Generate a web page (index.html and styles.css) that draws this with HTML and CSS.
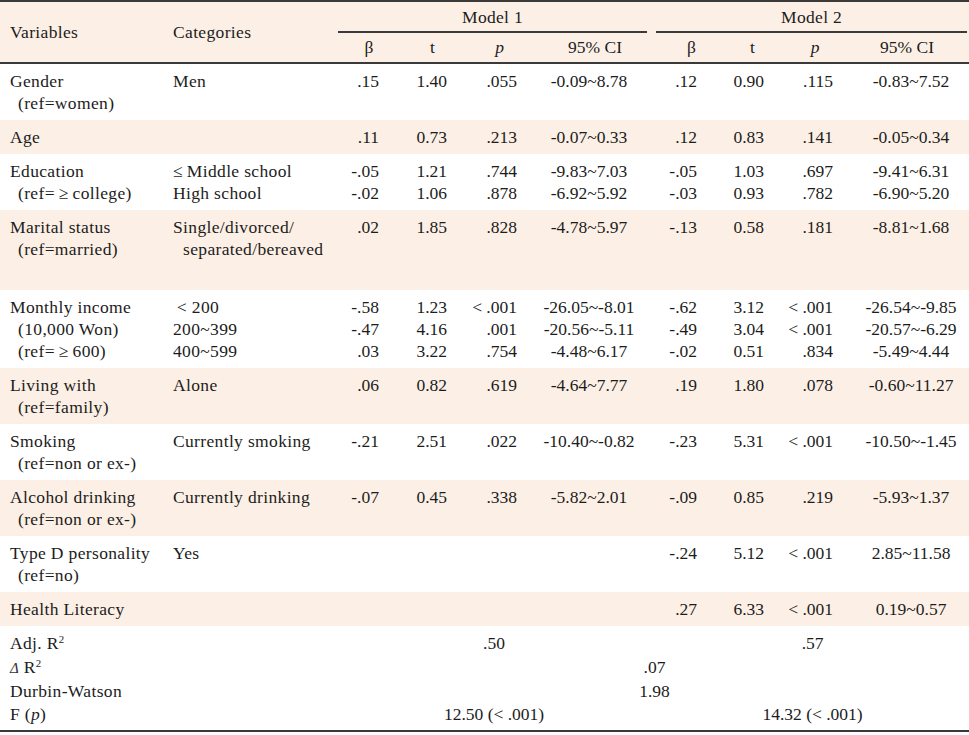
FILE: index.html
```html
<!DOCTYPE html>
<html lang="en">
<head>
<meta charset="utf-8">
<title>Regression table</title>
<link rel="stylesheet" href="styles.css">
</head>
<body>
<table class="reg">
  <colgroup>
    <col class="c-var"><col class="c-cat">
    <col class="c-b1"><col class="c-t1"><col class="c-p1"><col class="c-ci1">
    <col class="c-b2"><col class="c-t2"><col class="c-p2"><col class="c-ci2">
  </colgroup>
  <thead>
    <tr class="h1">
      <th rowspan="2" class="lbl">Variables</th>
      <th rowspan="2" class="lbl">Categories</th>
      <th colspan="4" class="model"><div class="m1">Model 1</div></th>
      <th colspan="4" class="model"><div class="m2">Model 2</div></th>
    </tr>
    <tr class="h2">
      <th class="b1">β</th><th class="t1">t</th><th class="p1"><i>p</i></th><th class="ci1">95% CI</th>
      <th class="b2">β</th><th class="t2">t</th><th class="p2"><i>p</i></th><th class="ci2">95% CI</th>
    </tr>
  </thead>
  <tbody>
    <tr>
      <td class="var">Gender<span class="sub">(ref=women)</span></td>
      <td class="cat">Men</td>
      <td class="b1">.15</td><td class="t1">1.40</td><td class="p1">.055</td><td class="ci1">-0.09~8.78</td>
      <td class="b2">.12</td><td class="t2">0.90</td><td class="p2">.115</td><td class="ci2">-0.83~7.52</td>
    </tr>
    <tr class="alt">
      <td class="var">Age</td>
      <td class="cat"></td>
      <td class="b1">.11</td><td class="t1">0.73</td><td class="p1">.213</td><td class="ci1">-0.07~0.33</td>
      <td class="b2">.12</td><td class="t2">0.83</td><td class="p2">.141</td><td class="ci2">-0.05~0.34</td>
    </tr>
    <tr>
      <td class="var">Education<span class="sub">(ref=&thinsp;≥&thinsp;college)</span></td>
      <td class="cat">≤&thinsp;Middle school<br>High school</td>
      <td class="b1">-.05<br>-.02</td><td class="t1">1.21<br>1.06</td><td class="p1">.744<br>.878</td><td class="ci1">-9.83~7.03<br>-6.92~5.92</td>
      <td class="b2">-.05<br>-.03</td><td class="t2">1.03<br>0.93</td><td class="p2">.697<br>.782</td><td class="ci2">-9.41~6.31<br>-6.90~5.20</td>
    </tr>
    <tr class="alt tall">
      <td class="var">Marital status<span class="sub">(ref=married)</span></td>
      <td class="cat">Single/divorced/<span class="sub2">separated/bereaved</span><span class="sub2">&nbsp;</span></td>
      <td class="b1">.02</td><td class="t1">1.85</td><td class="p1">.828</td><td class="ci1">-4.78~5.97</td>
      <td class="b2">-.13</td><td class="t2">0.58</td><td class="p2">.181</td><td class="ci2">-8.81~1.68</td>
    </tr>
    <tr>
      <td class="var">Monthly income<span class="sub">(10,000 Won)</span><span class="sub">(ref=&thinsp;≥&thinsp;600)</span></td>
      <td class="cat">&thinsp;&lt; 200<br>200~399<br>400~599</td>
      <td class="b1">-.58<br>-.47<br>.03</td><td class="t1">1.23<br>4.16<br>3.22</td><td class="p1">&lt; .001<br>.001<br>.754</td><td class="ci1">-26.05~-8.01<br>-20.56~-5.11<br>-4.48~6.17</td>
      <td class="b2">-.62<br>-.49<br>-.02</td><td class="t2">3.12<br>3.04<br>0.51</td><td class="p2">&lt; .001<br>&lt; .001<br>.834</td><td class="ci2">-26.54~-9.85<br>-20.57~-6.29<br>-5.49~4.44</td>
    </tr>
    <tr class="alt">
      <td class="var">Living with<span class="sub">(ref=family)</span></td>
      <td class="cat">Alone</td>
      <td class="b1">.06</td><td class="t1">0.82</td><td class="p1">.619</td><td class="ci1">-4.64~7.77</td>
      <td class="b2">.19</td><td class="t2">1.80</td><td class="p2">.078</td><td class="ci2">-0.60~11.27</td>
    </tr>
    <tr>
      <td class="var">Smoking<span class="sub">(ref=non or ex-)</span></td>
      <td class="cat">Currently smoking</td>
      <td class="b1">-.21</td><td class="t1">2.51</td><td class="p1">.022</td><td class="ci1">-10.40~-0.82</td>
      <td class="b2">-.23</td><td class="t2">5.31</td><td class="p2">&lt; .001</td><td class="ci2">-10.50~-1.45</td>
    </tr>
    <tr class="alt">
      <td class="var">Alcohol drinking<span class="sub">(ref=non or ex-)</span></td>
      <td class="cat">Currently drinking</td>
      <td class="b1">-.07</td><td class="t1">0.45</td><td class="p1">.338</td><td class="ci1">-5.82~2.01</td>
      <td class="b2">-.09</td><td class="t2">0.85</td><td class="p2">.219</td><td class="ci2">-5.93~1.37</td>
    </tr>
    <tr>
      <td class="var">Type D personality<span class="sub">(ref=no)</span></td>
      <td class="cat">Yes</td>
      <td class="b1"></td><td class="t1"></td><td class="p1"></td><td class="ci1"></td>
      <td class="b2">-.24</td><td class="t2">5.12</td><td class="p2">&lt; .001</td><td class="ci2">2.85~11.58</td>
    </tr>
    <tr class="alt">
      <td class="var">Health Literacy</td>
      <td class="cat"></td>
      <td class="b1"></td><td class="t1"></td><td class="p1"></td><td class="ci1"></td>
      <td class="b2">.27</td><td class="t2">6.33</td><td class="p2">&lt; .001</td><td class="ci2">0.19~0.57</td>
    </tr>
    <tr class="stat s-first">
      <td colspan="2" class="slbl">Adj. R<sup>2</sup></td>
      <td colspan="4" class="sm1">.50</td>
      <td colspan="4" class="sm2">.57</td>
    </tr>
    <tr class="stat s-mid">
      <td colspan="2" class="slbl"><i class="delta">Δ</i> R<sup>2</sup></td>
      <td colspan="8" class="sall">.07</td>
    </tr>
    <tr class="stat s-dw">
      <td colspan="2" class="slbl">Durbin-Watson</td>
      <td colspan="8" class="sall">1.98</td>
    </tr>
    <tr class="stat s-last">
      <td colspan="2" class="slbl">F (<i>p</i>)</td>
      <td colspan="4" class="sm1">12.50 (&lt; .001)</td>
      <td colspan="4" class="sm2">14.32 (&lt; .001)</td>
    </tr>
  </tbody>
</table>
<p class="note">CI=Confidence interval; ref=reference; Adj. R<sup>2</sup>=adjusted R squared.</p>
</body>
</html>
```

FILE: styles.css
```css
html, body {
  margin: 0;
  padding: 0;
  background: #ffffff;
}

body {
  font-family: "Liberation Serif", "Times New Roman", serif;
  font-size: 17.5px;
  line-height: 22px;
  color: #1c1c1c;
}

.reg {
  width: 969px;
  table-layout: fixed;
  border-collapse: separate;
  border-spacing: 0;
  border-top: 2px solid #3a3a3a;
  border-bottom: 2px solid #3a3a3a;
}

.c-var { width: 163px; }
.c-cat { width: 175px; }
.c-b1  { width: 62px; }
.c-t1  { width: 65px; }
.c-p1  { width: 75px; }
.c-ci1 { width: 110px; }
.c-b2  { width: 83px; }
.c-t2  { width: 39px; }
.c-p2  { width: 86px; }
.c-ci2 { width: 111px; }

thead th {
  background: #fcf0e6;
  font-weight: normal;
  white-space: nowrap;
}

th.lbl {
  text-align: left;
  vertical-align: middle;
  padding: 0 0 0 10px;
  letter-spacing: 0.35px;
  border-bottom: 2px solid #3a3a3a;
}

.h1 th.model {
  padding: 4px 0 0 0;
  text-align: center;
  vertical-align: top;
  letter-spacing: 0.3px;
}

.m1, .m2 {
  padding-bottom: 3px;
  border-bottom: 2px solid #3a3a3a;
}

.m1 { margin: 0 3px 0 0; }
.m2 { margin: 0 2px 0 6px; }

.h2 th {
  padding: 3px 0 4px;
  text-align: center;
  border-bottom: 2px solid #3a3a3a;
}

.h2 th.p1 { padding-right: 6px; }
.h2 th.ci2 { padding-right: 13px; }

tbody td {
  padding: 6px 0;
  vertical-align: top;
  white-space: nowrap;
}

tbody tr.alt td {
  background: #fcf0e6;
}

tbody tr.tall td {
  padding-bottom: 8px;
}

td.var,
td.cat {
  padding-left: 10px;
  text-align: left;
  letter-spacing: 0.35px;
}

.sub {
  display: block;
  padding-left: 8px;
}

.sub2 {
  display: block;
  padding-left: 10px;
}

tbody td.b1  { text-align: right; padding-right: 21px; }
tbody td.t1  { text-align: right; padding-right: 18px; }
tbody td.p1  { text-align: right; padding-right: 23px; }
tbody td.ci1 { text-align: center; padding-right: 12px; }
tbody td.b2  { text-align: right; padding-right: 36px; }
tbody td.t2  { text-align: right; padding-right: 8px; }
tbody td.p2  { text-align: right; padding-right: 25px; }
tbody td.ci2 { text-align: center; padding-right: 5px; }

tr.stat td {
  padding-top: 0;
  padding-bottom: 0;
  line-height: 24px;
}

tr.stat td.slbl {
  padding-left: 10px;
  text-align: left;
  letter-spacing: 0.35px;
}

tr.stat td.sm1 { text-align: center; }
tr.stat td.sm2 { text-align: center; padding-left: 6px; }
tr.stat td.sall { text-align: center; padding-left: 2px; }

tr.s-first td { padding-top: 5px; }
tr.s-dw td { line-height: 22px; }
tr.s-last td { padding-bottom: 4px; }

sup {
  font-size: 0.62em;
  line-height: 0;
  vertical-align: baseline;
  position: relative;
  top: -0.55em;
}

.delta {
  font-size: 0.85em;
  color: #333;
}

.note {
  margin: 0;
  padding: 1px 0 0 10px;
  font-size: 17.5px;
  line-height: 22px;
}
```
